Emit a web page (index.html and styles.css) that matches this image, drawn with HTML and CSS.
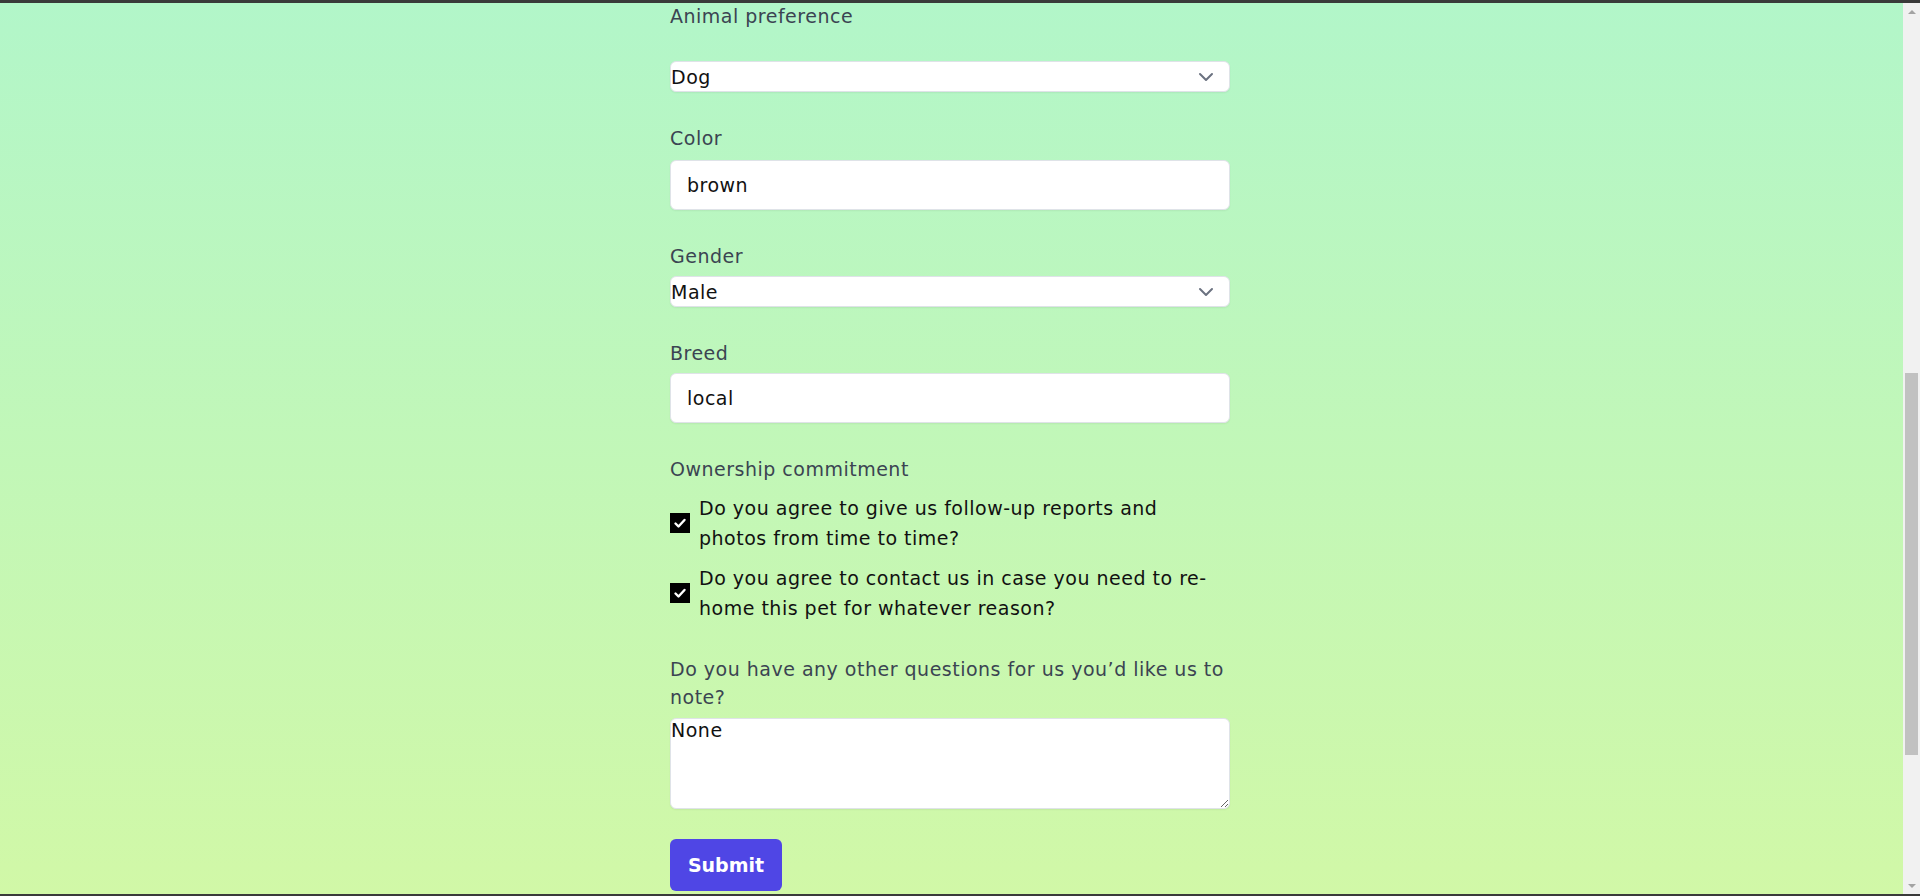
FILE: index.html
```html
<!DOCTYPE html>
<html lang="en">
<head>
<meta charset="utf-8">
<title>Adoption form</title>
<link rel="stylesheet" href="styles.css">
</head>
<body>
<div class="topbar"></div>
<div class="frame">
  <main class="page">
    <form class="form">
      <div class="group">
        <label class="label label-spaced" for="animal">Animal preference</label>
        <div class="select-wrap">
          <select id="animal" class="select"><option>Dog</option></select>
          <svg class="chevron" viewBox="0 0 16 10" width="16" height="10"><path d="M2 2l6 6 6-6" fill="none" stroke="#6b7280" stroke-width="2" stroke-linecap="round" stroke-linejoin="round"/></svg>
        </div>
      </div>
      <div class="group">
        <label class="label" for="color">Color</label>
        <input id="color" class="input" type="text" value="brown">
      </div>
      <div class="group">
        <label class="label label-tight" for="gender">Gender</label>
        <div class="select-wrap">
          <select id="gender" class="select"><option>Male</option></select>
          <svg class="chevron" viewBox="0 0 16 10" width="16" height="10"><path d="M2 2l6 6 6-6" fill="none" stroke="#6b7280" stroke-width="2" stroke-linecap="round" stroke-linejoin="round"/></svg>
        </div>
      </div>
      <div class="group">
        <label class="label label-breed" for="breed">Breed</label>
        <input id="breed" class="input" type="text" value="local">
      </div>
      <div class="group">
        <div class="label label-loose">Ownership commitment</div>
        <div class="check-row">
          <span class="check"><svg viewBox="0 0 20 20" width="20" height="20"><path d="M5.5 10.5l3 3 6-6.5" fill="none" stroke="#fff" stroke-width="2.4" stroke-linecap="round" stroke-linejoin="round"/></svg></span>
          <span class="check-text">Do you agree to give us follow-up reports and photos from time to time?</span>
        </div>
        <div class="check-row">
          <span class="check"><svg viewBox="0 0 20 20" width="20" height="20"><path d="M5.5 10.5l3 3 6-6.5" fill="none" stroke="#fff" stroke-width="2.4" stroke-linecap="round" stroke-linejoin="round"/></svg></span>
          <span class="check-text">Do you agree to contact us in case you need to re-home this pet for whatever reason?</span>
        </div>
      </div>
      <div class="group">
        <label class="label label-question" for="notes">Do you have any other questions for us you’d like us to note?</label>
        <textarea id="notes" class="textarea">None</textarea>
      </div>
      <div>
        <button type="button" class="submit">Submit</button>
      </div>
    </form>
  </main>
  <div class="scrollbar">
    <div class="sb-btn"><span class="tri-up"></span></div>
    <div class="sb-track"><div class="sb-thumb"></div></div>
    <div class="sb-btn"><span class="tri-down"></span></div>
  </div>
</div>
<div class="bottombar"></div>
</body>
</html>
```

FILE: styles.css
```css
html, body {
  margin: 0;
  padding: 0;
  height: 896px;
  overflow: hidden;
}
body {
  font-family: "DejaVu Sans", "Noto Sans", sans-serif;
  font-size: 19px;
  letter-spacing: 0.5px;
  display: flex;
  flex-direction: column;
}
.topbar {
  height: 3px;
  background: #3a3a3a;
  flex: none;
}
.bottombar {
  height: 2px;
  background: #3a3a3a;
  flex: none;
}
.frame {
  flex: 1;
  display: flex;
  min-height: 0;
}
.page {
  flex: 1;
  background: linear-gradient(to bottom, #b2f6c9 0%, #d1f8a7 100%);
  padding-right: 3px;
}
.form {
  width: 560px;
  margin: -1px auto 0;
  display: flex;
  flex-direction: column;
}
.group {
  margin-bottom: 32px;
}
.label {
  display: block;
  font-size: 19px;
  line-height: 28px;
  color: #3b4452;
  margin-bottom: 8px;
}
.label-spaced { margin-bottom: 31px; }
.label-tight { margin-bottom: 6px; }
.label-breed { margin-bottom: 6px; }
.label-loose { margin-bottom: 10px; }
.label-question { line-height: 28px; margin-bottom: 7px; }
.select-wrap {
  position: relative;
}
.select {
  appearance: none;
  -webkit-appearance: none;
  display: block;
  width: 100%;
  height: 31px;
  margin: 0;
  padding: 0;
  font-family: inherit;
  font-size: 19px;
  letter-spacing: inherit;
  color: #111;
  background: #fff;
  border: 1px solid #dfe3e8;
  border-radius: 6px;
  box-shadow: 0 1px 2px rgba(0,0,0,0.06);
}
.chevron {
  position: absolute;
  right: 16px;
  top: 11px;
  pointer-events: none;
}
.input {
  display: block;
  box-sizing: border-box;
  width: 100%;
  height: 50px;
  margin: 0;
  padding: 0 16px;
  font-family: inherit;
  font-size: 19px;
  letter-spacing: inherit;
  color: #111;
  background: #fff;
  border: 1px solid #dfe3e8;
  border-radius: 6px;
  box-shadow: 0 1px 2px rgba(0,0,0,0.06);
}
.check-row {
  display: flex;
  align-items: center;
  gap: 9px;
  margin-bottom: 10px;
}
.check-row:last-child { margin-bottom: 0; }
.check {
  flex: none;
  width: 20px;
  height: 20px;
  background: #000;
  display: flex;
}
.check-text {
  font-size: 19px;
  line-height: 30px;
  color: #111;
}
.textarea {
  display: block;
  box-sizing: border-box;
  width: 100%;
  height: 91px;
  margin: 0;
  padding: 0;
  font-family: inherit;
  font-size: 19px;
  letter-spacing: inherit;
  color: #111;
  background: #fff;
  border: 1px solid #dfe3e8;
  border-radius: 6px;
  box-shadow: 0 1px 2px rgba(0,0,0,0.06);
  resize: vertical;
}
.submit {
  width: 112px;
  height: 52px;
  border: none;
  border-radius: 6px;
  background: #4f46e5;
  color: #fff;
  font-family: inherit;
  font-size: 19px;
  letter-spacing: 0;
  font-weight: 700;
  padding: 0;
  margin: -2px 0 0;
}
.scrollbar {
  width: 17px;
  flex: none;
  background: #f1f1f1;
  display: flex;
  flex-direction: column;
}
.sb-btn {
  height: 17px;
  display: flex;
  align-items: center;
  justify-content: center;
}
.tri-up {
  width: 0; height: 0;
  border-left: 4px solid transparent;
  border-right: 4px solid transparent;
  border-bottom: 4px solid #a3a3a3;
}
.tri-down {
  width: 0; height: 0;
  border-left: 4px solid transparent;
  border-right: 4px solid transparent;
  border-top: 4px solid #a3a3a3;
}
.sb-track {
  flex: 1;
  padding: 0 2px;
}
.sb-thumb {
  margin-top: 353px;
  height: 382px;
  background: #c1c1c1;
}
```
